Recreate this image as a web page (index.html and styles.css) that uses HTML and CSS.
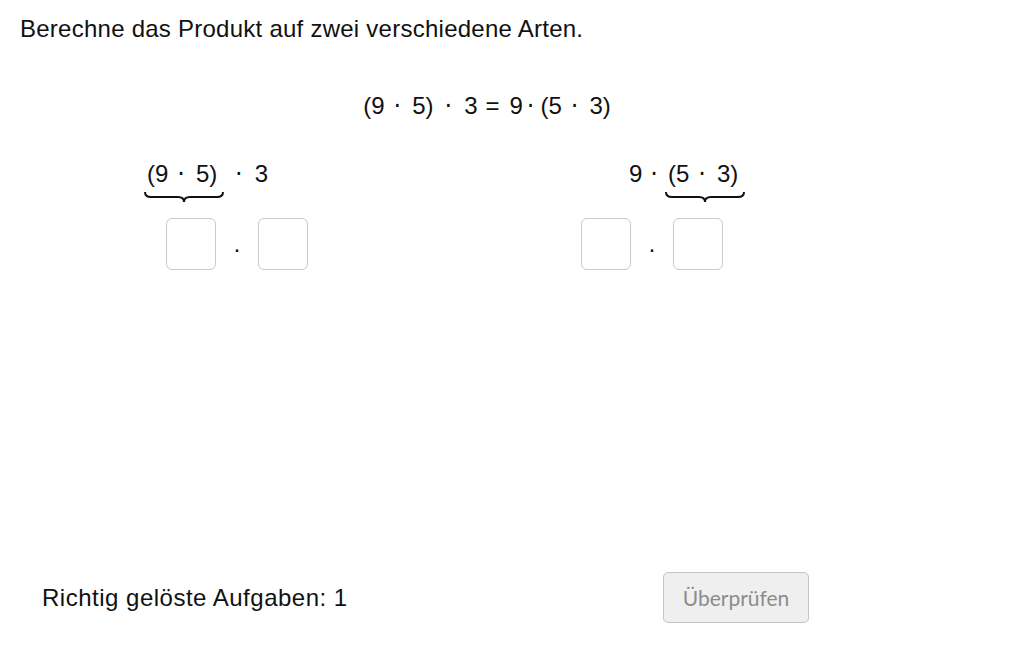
FILE: index.html
```html
<!DOCTYPE html>
<html lang="de">
<head>
    <meta charset="UTF-8">
    <title>Assoziativgesetz</title>
    <link rel="stylesheet" href="styles.css">
</head>
<body>
<div class="page">
    <p class="task">Berechne das Produkt auf zwei verschiedene Arten.</p>

    <div class="equation">
        <span>(9</span><span class="dot">·</span><span>5)</span><span class="dot wide">·</span><span>3</span><span class="eq">=</span><span>9</span><span class="dot tight">·</span><span>(5</span><span class="dot">·</span><span>3)</span>
    </div>

    <div class="columns">
        <div class="col col-left">
            <div class="term">
                <span class="braced">
                    <span class="expr"><span>(9</span><span class="dot">·</span><span>5)</span></span>
                    <svg class="brace" viewBox="0 0 80 12" preserveAspectRatio="none">
                        <path d="M1,1 Q1,6 7,6 L34,6 Q40,6 40,11 Q40,6 46,6 L73,6 Q79,6 79,1"/>
                    </svg>
                </span>
                <span class="dot wide">·</span><span>3</span>
            </div>
            <div class="slots">
                <input class="slot" type="text">
                <span class="times">·</span>
                <input class="slot" type="text">
            </div>
        </div>

        <div class="col col-right">
            <div class="term term-right">
                <span>9</span><span class="dot lead">·</span>
                <span class="braced">
                    <span class="expr"><span>(5</span><span class="dot">·</span><span>3)</span></span>
                    <svg class="brace" viewBox="0 0 80 12" preserveAspectRatio="none">
                        <path d="M1,1 Q1,6 7,6 L34,6 Q40,6 40,11 Q40,6 46,6 L73,6 Q79,6 79,1"/>
                    </svg>
                </span>
            </div>
            <div class="slots slots-right">
                <input class="slot" type="text">
                <span class="times">·</span>
                <input class="slot" type="text">
            </div>
        </div>
    </div>

    <div class="footer">
        <span class="score">Richtig gelöste Aufgaben: 1</span>
        <button class="check" disabled>Überprüfen</button>
    </div>
</div>
</body>
</html>
```

FILE: styles.css
```css
html, body{
    margin: 0;
    padding: 0;
    background: #fff;
}
.page{
    height: 645px;
    box-sizing: border-box;
    padding: 16px 20px 22px;
    display: flex;
    flex-direction: column;
    font-family: "Liberation Sans", Arial, sans-serif;
    font-size: 24px;
    line-height: 26px;
    letter-spacing: 0.25px;
    color: #111;
}
.task{
    margin: 0;
}
.equation{
    margin-top: 51px;
    display: flex;
    justify-content: center;
    padding-right: 58px;
    letter-spacing: 0;
}
/* Malpunkt, etwas runder als der von Liberation */
.dot{
    font-family: "DejaVu Sans", sans-serif;
    margin: 0 11px 0 9px;
}
.dot.wide{
    margin: 0 12px 0 11px;
}
.dot.tight{
    margin: 0 6px 0 4px;
}
.dot.lead{
    margin: 0 7px 0 8px;
}
.eq{
    margin: 0 10px 0 8px;
}
.columns{
    margin-top: 42px;
    display: flex;
    padding-left: 124px;
    letter-spacing: 0;
}
.col-left{
    flex: 0 0 437px;
}
.term{
    display: flex;
    align-items: flex-start;
}
.term-right{
    padding-left: 48px;
}
.braced{
    display: inline-flex;
    flex-direction: column;
    padding: 0;
}
.expr{
    padding: 0 4px 0 3px;
}
.brace{
    display: block;
    width: 100%;
    height: 12px;
    margin-top: 4px;
}
.brace path{
    fill: none;
    stroke: #111;
    stroke-width: 2;
    vector-effect: non-scaling-stroke;
}
.slots{
    margin-top: 15px;
    padding-left: 22px;
    display: flex;
    align-items: center;
}
.slots-right{
    padding-left: 0;
}
.slot{
    width: 50px;
    height: 52px;
    box-sizing: border-box;
    margin: 0;
    border: 1.5px solid #cacaca;
    border-radius: 6px;
    background: #fff;
    outline: none;
}
.times{
    width: 42px;
    text-align: center;
    padding-top: 10px;
}
.footer{
    margin-top: auto;
    display: flex;
    align-items: center;
    padding-left: 22px;
}
.score{
    flex: 0 0 621px;
    letter-spacing: 0.5px;
}
.check{
    width: 146px;
    height: 51px;
    border: 1px solid #c4c4c4;
    border-radius: 5px;
    background: #efefef;
    color: #8c8c8c;
    font-family: Lato, "Open Sans", sans-serif;
    font-size: 21px;
    letter-spacing: 0;
    padding: 0;
}
```
